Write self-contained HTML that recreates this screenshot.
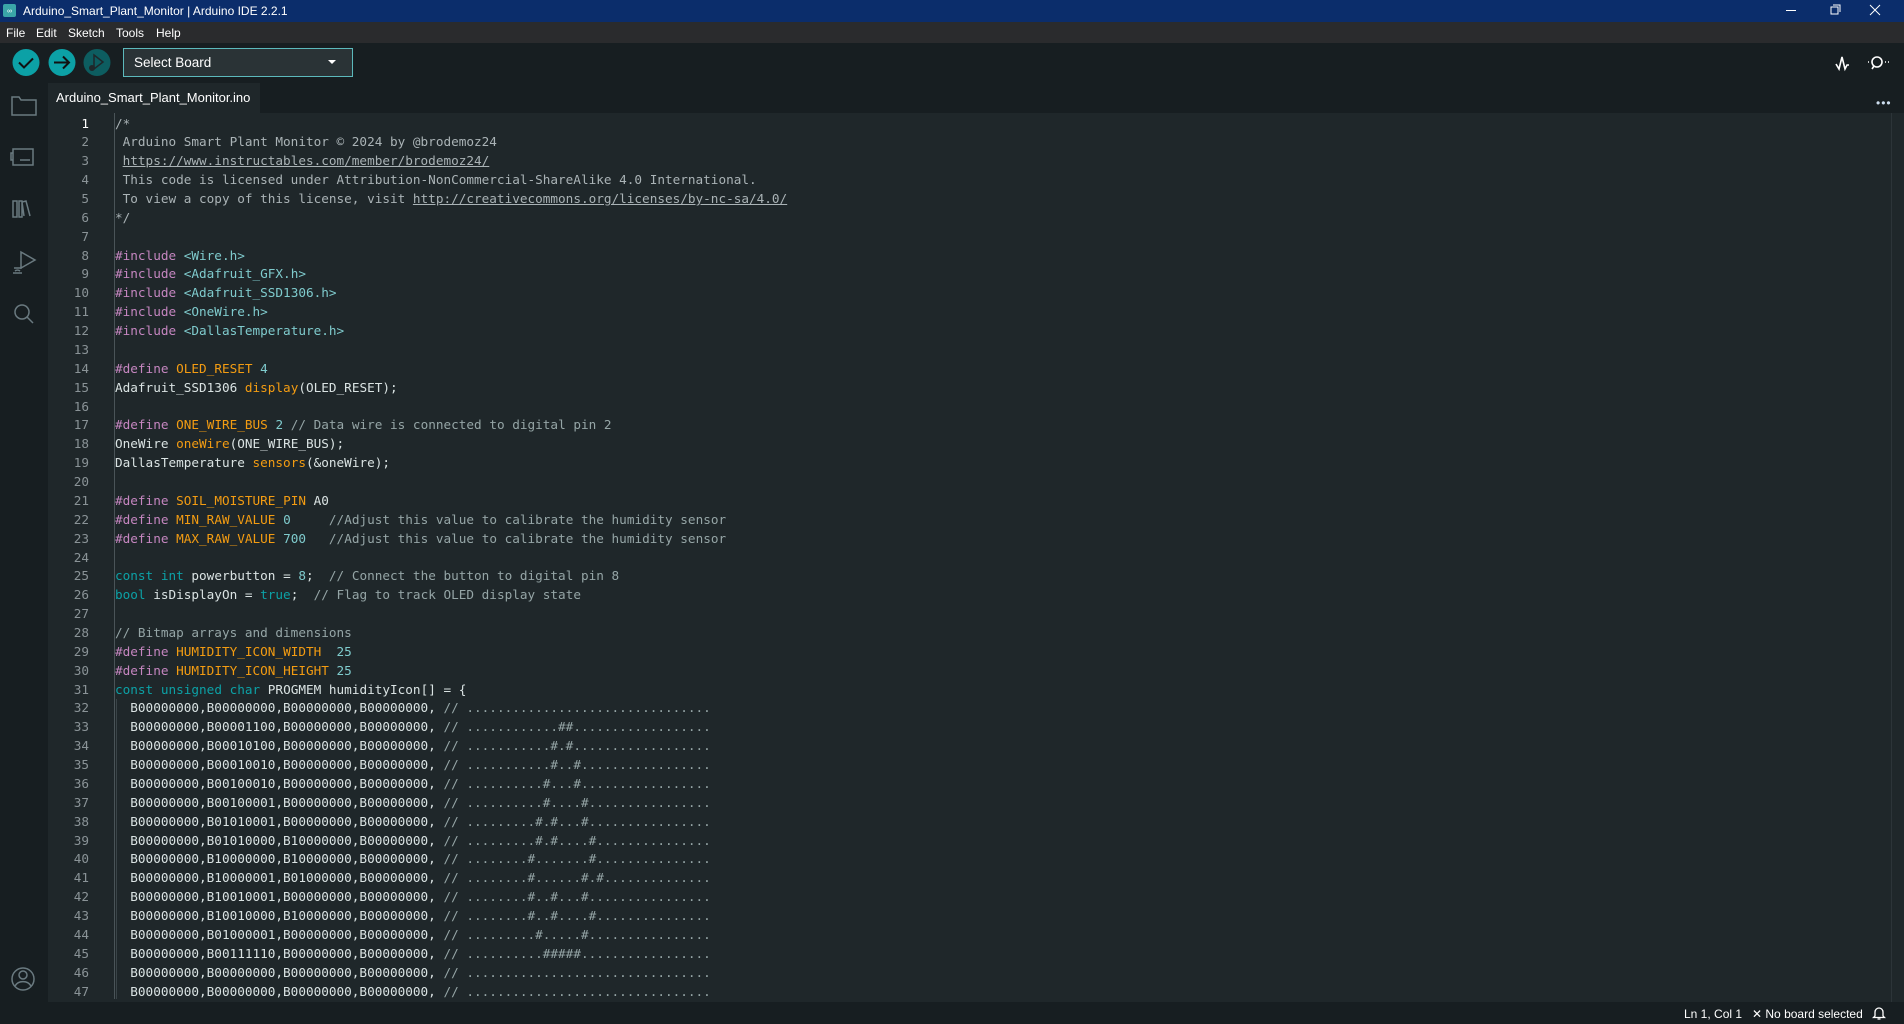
<!DOCTYPE html>
<html><head><meta charset="utf-8"><style>
*{margin:0;padding:0;box-sizing:border-box}
body{width:1904px;height:1024px;overflow:hidden;background:#171e21;font-family:"Liberation Sans",sans-serif;position:relative}
#title{position:absolute;left:0;top:0;width:1904px;height:22px;background:#0b2d6b;color:#fff;font-size:12px}
#menu{position:absolute;left:0;top:22px;width:1904px;height:21px;background:#2a2b2d;color:#fff;font-size:12px}
#menu span{position:absolute;top:4px}
#editor{position:absolute;left:48px;top:113px;width:1856px;height:889px;background:#1f272a}
.tab{position:absolute;left:48px;top:83px;width:212px;height:30px;background:#1f272a;color:#fff;font-size:13px;padding:7px 0 0 8px}
#code{position:absolute;left:0;top:114.5px;font-family:"DejaVu Sans Mono",monospace;font-size:12.7px;line-height:18.87px;white-space:pre;color:#dae3e3}
.ln{position:absolute;left:0;width:89px;text-align:right;color:#8a9397}
.cl{position:absolute;left:115px}
.k{color:#c586c0}.m{color:#f39c12}.t{color:#0ca1a6}.n{color:#7fcbcd}.c{color:#95a5a6}.cb{color:#aab3b6}.u{text-decoration:underline}
.st{position:absolute;top:1007px;color:#fff;font-size:12px}
</style></head><body>
<div id="title"><svg style="position:absolute;left:3px;top:4px" width="13" height="13"><rect width="13" height="13" rx="2" fill="#3aa6a8"/><text x="6.5" y="9" font-size="7" fill="#fff" text-anchor="middle" font-family="Liberation Sans">∞</text></svg><span style="position:absolute;left:23px;top:4px">Arduino_Smart_Plant_Monitor | Arduino IDE 2.2.1</span>
<svg style="position:absolute;left:1780px;top:0" width="124" height="22" stroke="#fff" fill="none" stroke-width="1"><path d="M6 10.5h10"/><path d="M51 7h7v7h-7z M53 5h7v7"/><path d="M90 5l10 10M100 5l-10 10"/></svg></div>
<div id="menu"><span style="left:6px">File</span><span style="left:36px">Edit</span><span style="left:68px">Sketch</span><span style="left:116px">Tools</span><span style="left:156px">Help</span></div>
<svg style="position:absolute;left:0;top:43px" width="380" height="40">
<circle cx="26" cy="19.5" r="13.5" fill="#0ca1a6"/><path d="M19 19.5l5 5 9-9" stroke="#111" stroke-width="2" fill="none"/>
<circle cx="62" cy="19.5" r="13.5" fill="#0ca1a6"/><path d="M54 19.5h15M63 13.5l6 6-6 6" stroke="#111" stroke-width="2" fill="none"/>
<circle cx="97" cy="19.5" r="13.5" fill="#0d5d60"/><path d="M94 12l9 7-9 7z" stroke="#1f272a" stroke-width="1.5" fill="none"/><circle cx="92" cy="25" r="3" fill="#1f272a"/>
<rect x="123.5" y="5.5" width="229" height="28" fill="#2a3336" stroke="#5cb9bc"/>
<text x="134" y="24" fill="#fff" font-size="13.5" font-family="Liberation Sans">Select Board</text>
<path d="M328 17h8l-4 4z" fill="#fff"/></svg>
<svg style="position:absolute;left:1830px;top:50px" width="74" height="26" stroke="#fff" fill="none" stroke-width="1.6"><path d="M6 14l3 5 3-12 3 12 2-4h2"/><circle cx="47" cy="12" r="5"/><path d="M44 16l-2 3M38 12h1M55 12h1M58 12h1"/></svg>
<div style="position:absolute;left:1876px;top:96px;color:#cde;font-size:12px;letter-spacing:1px">•••</div>
<svg style="position:absolute;left:0;top:90px" width="48" height="920" stroke="#6a7a80" fill="none" stroke-width="1.5">
<path d="M12 7h7l2 3h15v15H12z"/>
<g transform="translate(0,14)"><path d="M13 45h20v16H13zM20 56h10M13 49h-2v7h2"/></g>
<g transform="translate(0,34)"><path d="M13 93v-16h4v16zM19 93v-16h3v16zM24 92l-2-14 4-1 4 15"/></g>
<g transform="translate(0,48)"><path d="M21 130l14 -8-14-8z M14 130h8M13 135h9M15 133a4 4 0 0 1 5 0"/></g>
<g transform="translate(0,56)"><circle cx="22" cy="166" r="7"/><path d="M27 171l6 6"/></g>
<g transform="translate(0,5)"><circle cx="23" cy="884" r="11"/><circle cx="23" cy="880" r="4"/><path d="M15 891a9 8 0 0 1 16 0"/></g></svg>
<div class="tab">Arduino_Smart_Plant_Monitor.ino</div>
<div id="editor"><div style="position:absolute;left:66px;top:0;width:1px;height:886px;background:#4a5458"></div><div style="position:absolute;left:1843px;top:0;width:1px;height:889px;background:#2c3438"></div></div>
<div id="code">
<div class="ln" style="top:0;color:#fff">1</div><div class="cl" style="top:0"><span class="cb">/*</span></div>
<div class="ln" style="top:18.87px">2</div><div class="cl cb" style="top:18.87px"> Arduino Smart Plant Monitor © 2024 by @brodemoz24</div>
<div class="ln" style="top:37.74px">3</div><div class="cl cb" style="top:37.74px"> <span class="u">https://www.instructables.com/member/brodemoz24/</span></div>
<div class="ln" style="top:56.61px">4</div><div class="cl cb" style="top:56.61px"> This code is licensed under Attribution-NonCommercial-ShareAlike 4.0 International.</div>
<div class="ln" style="top:75.48px">5</div><div class="cl cb" style="top:75.48px"> To view a copy of this license, visit <span class="u">http://creativecommons.org/licenses/by-nc-sa/4.0/</span></div>
<div class="ln" style="top:94.35px">6</div><div class="cl cb" style="top:94.35px">*/</div>
<div class="ln" style="top:113.22px">7</div>
<div class="ln" style="top:132.09px">8</div><div class="cl" style="top:132.09px"><span class="k">#include</span> <span class="n">&lt;Wire.h&gt;</span></div>
<div class="ln" style="top:150.96px">9</div><div class="cl" style="top:150.96px"><span class="k">#include</span> <span class="n">&lt;Adafruit_GFX.h&gt;</span></div>
<div class="ln" style="top:169.83px">10</div><div class="cl" style="top:169.83px"><span class="k">#include</span> <span class="n">&lt;Adafruit_SSD1306.h&gt;</span></div>
<div class="ln" style="top:188.7px">11</div><div class="cl" style="top:188.7px"><span class="k">#include</span> <span class="n">&lt;OneWire.h&gt;</span></div>
<div class="ln" style="top:207.57px">12</div><div class="cl" style="top:207.57px"><span class="k">#include</span> <span class="n">&lt;DallasTemperature.h&gt;</span></div>
<div class="ln" style="top:226.44px">13</div>
<div class="ln" style="top:245.31px">14</div><div class="cl" style="top:245.31px"><span class="k">#define</span> <span class="m">OLED_RESET</span> <span class="n">4</span></div>
<div class="ln" style="top:264.18px">15</div><div class="cl" style="top:264.18px">Adafruit_SSD1306 <span class="m">display</span>(OLED_RESET);</div>
<div class="ln" style="top:283.05px">16</div>
<div class="ln" style="top:301.92px">17</div><div class="cl" style="top:301.92px"><span class="k">#define</span> <span class="m">ONE_WIRE_BUS</span> <span class="n">2</span> <span class="c">// Data wire is connected to digital pin 2</span></div>
<div class="ln" style="top:320.79px">18</div><div class="cl" style="top:320.79px">OneWire <span class="m">oneWire</span>(ONE_WIRE_BUS);</div>
<div class="ln" style="top:339.66px">19</div><div class="cl" style="top:339.66px">DallasTemperature <span class="m">sensors</span>(&amp;oneWire);</div>
<div class="ln" style="top:358.53px">20</div>
<div class="ln" style="top:377.4px">21</div><div class="cl" style="top:377.4px"><span class="k">#define</span> <span class="m">SOIL_MOISTURE_PIN</span> A0</div>
<div class="ln" style="top:396.27px">22</div><div class="cl" style="top:396.27px"><span class="k">#define</span> <span class="m">MIN_RAW_VALUE</span> <span class="n">0</span>     <span class="c">//Adjust this value to calibrate the humidity sensor</span></div>
<div class="ln" style="top:415.14px">23</div><div class="cl" style="top:415.14px"><span class="k">#define</span> <span class="m">MAX_RAW_VALUE</span> <span class="n">700</span>   <span class="c">//Adjust this value to calibrate the humidity sensor</span></div>
<div class="ln" style="top:434.01px">24</div>
<div class="ln" style="top:452.88px">25</div><div class="cl" style="top:452.88px"><span class="t">const</span> <span class="t">int</span> powerbutton = <span class="n">8</span>;  <span class="c">// Connect the button to digital pin 8</span></div>
<div class="ln" style="top:471.75px">26</div><div class="cl" style="top:471.75px"><span class="t">bool</span> isDisplayOn = <span class="t">true</span>;  <span class="c">// Flag to track OLED display state</span></div>
<div class="ln" style="top:490.62px">27</div>
<div class="ln" style="top:509.49px">28</div><div class="cl c" style="top:509.49px">// Bitmap arrays and dimensions</div>
<div class="ln" style="top:528.36px">29</div><div class="cl" style="top:528.36px"><span class="k">#define</span> <span class="m">HUMIDITY_ICON_WIDTH</span>  <span class="n">25</span></div>
<div class="ln" style="top:547.23px">30</div><div class="cl" style="top:547.23px"><span class="k">#define</span> <span class="m">HUMIDITY_ICON_HEIGHT</span> <span class="n">25</span></div>
<div class="ln" style="top:566.1px">31</div><div class="cl" style="top:566.1px"><span class="t">const</span> <span class="t">unsigned</span> <span class="t">char</span> PROGMEM humidityIcon[] = {</div>
<div class="ln" style="top:584.97px">32</div><div class="cl" style="top:584.97px">  B00000000,B00000000,B00000000,B00000000, <span class="c">// ................................</span></div>
<div class="ln" style="top:603.84px">33</div><div class="cl" style="top:603.84px">  B00000000,B00001100,B00000000,B00000000, <span class="c">// ............##..................</span></div>
<div class="ln" style="top:622.71px">34</div><div class="cl" style="top:622.71px">  B00000000,B00010100,B00000000,B00000000, <span class="c">// ...........#.#..................</span></div>
<div class="ln" style="top:641.58px">35</div><div class="cl" style="top:641.58px">  B00000000,B00010010,B00000000,B00000000, <span class="c">// ...........#..#.................</span></div>
<div class="ln" style="top:660.45px">36</div><div class="cl" style="top:660.45px">  B00000000,B00100010,B00000000,B00000000, <span class="c">// ..........#...#.................</span></div>
<div class="ln" style="top:679.32px">37</div><div class="cl" style="top:679.32px">  B00000000,B00100001,B00000000,B00000000, <span class="c">// ..........#....#................</span></div>
<div class="ln" style="top:698.19px">38</div><div class="cl" style="top:698.19px">  B00000000,B01010001,B00000000,B00000000, <span class="c">// .........#.#...#................</span></div>
<div class="ln" style="top:717.06px">39</div><div class="cl" style="top:717.06px">  B00000000,B01010000,B10000000,B00000000, <span class="c">// .........#.#....#...............</span></div>
<div class="ln" style="top:735.93px">40</div><div class="cl" style="top:735.93px">  B00000000,B10000000,B10000000,B00000000, <span class="c">// ........#.......#...............</span></div>
<div class="ln" style="top:754.8px">41</div><div class="cl" style="top:754.8px">  B00000000,B10000001,B01000000,B00000000, <span class="c">// ........#......#.#..............</span></div>
<div class="ln" style="top:773.67px">42</div><div class="cl" style="top:773.67px">  B00000000,B10010001,B00000000,B00000000, <span class="c">// ........#..#...#................</span></div>
<div class="ln" style="top:792.54px">43</div><div class="cl" style="top:792.54px">  B00000000,B10010000,B10000000,B00000000, <span class="c">// ........#..#....#...............</span></div>
<div class="ln" style="top:811.41px">44</div><div class="cl" style="top:811.41px">  B00000000,B01000001,B00000000,B00000000, <span class="c">// .........#.....#................</span></div>
<div class="ln" style="top:830.28px">45</div><div class="cl" style="top:830.28px">  B00000000,B00111110,B00000000,B00000000, <span class="c">// ..........#####.................</span></div>
<div class="ln" style="top:849.15px">46</div><div class="cl" style="top:849.15px">  B00000000,B00000000,B00000000,B00000000, <span class="c">// ................................</span></div>
<div class="ln" style="top:868.02px">47</div><div class="cl" style="top:868.02px">  B00000000,B00000000,B00000000,B00000000, <span class="c">// ................................</span></div>
</div>
<div style="position:absolute;left:116px;top:699px;width:1px;height:300px;background:#3a4448"></div>
<span class="st" style="left:1684px">Ln 1, Col 1</span>
<span class="st" style="left:1752px">✕ No board selected</span>
<svg style="position:absolute;left:1872px;top:1005px" width="14" height="16" stroke="#fff" fill="none" stroke-width="1.3"><path d="M3 11V7a4 4 0 0 1 8 0v4l1.5 1.5h-11z M5.5 14h3"/></svg>
</body></html>
